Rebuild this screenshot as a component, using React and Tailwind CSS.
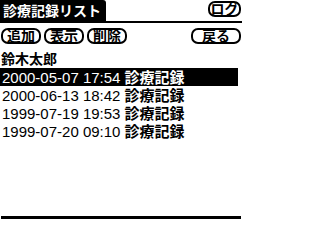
import React from 'react';

const records = [
  { date: '2000-05-07 17:54', label: '診療記録' },
  { date: '2000-06-13 18:42', label: '診療記録' },
  { date: '1999-07-19 19:53', label: '診療記録' },
  { date: '1999-07-20 09:10', label: '診療記録' },
];

function PalmButton({ children, className = '' }) {
  return (
    <button
      className={`h-[16px] px-[4px] border-2 border-black rounded-[7px] bg-white text-black text-[14px] leading-none font-bold whitespace-nowrap flex items-center justify-center ${className}`}
    >
      {children}
    </button>
  );
}

export default function App() {
  const selected = 0;

  return (
    <div
      className="w-[242px] h-[241px] bg-white text-black overflow-hidden flex flex-col"
      style={{ fontFamily: '"Liberation Sans", "Noto Sans CJK JP", sans-serif' }}
    >
      {/* Title bar */}
      <div className="flex items-end border-b-2 border-black">
        <div className="h-[21px] bg-black text-white text-[14px] font-bold leading-none flex items-center pl-[3px] pr-[5px] rounded-tr-[3px]">
          診療記録リスト
        </div>
        <PalmButton className="ml-auto mr-[1px] mb-[4px] w-[33px] text-[13px]">ログ</PalmButton>
      </div>

      {/* Command buttons */}
      <div className="flex items-center gap-[3px] mt-[5px] px-[1px]">
        <PalmButton className="w-[40px]">追加</PalmButton>
        <PalmButton className="w-[40px]">表示</PalmButton>
        <PalmButton className="w-[40px]">削除</PalmButton>
        <PalmButton className="ml-auto w-[50px]">戻る</PalmButton>
      </div>

      {/* Patient name */}
      <div className="mt-[7px] px-[1px] text-[14px] font-bold leading-[16px]">鈴木太郎</div>

      {/* Record list */}
      <div className="mt-[1px] flex flex-col">
        {records.map((r, i) => (
          <div
            key={i}
            className={`h-[18px] w-[238px] px-[2px] flex items-center text-[15px] leading-none whitespace-nowrap ${
              i === selected ? 'bg-black text-white' : ''
            }`}
          >
            <span>{r.date}</span>
            <span className="ml-[4px] text-[15px] font-bold">{r.label}</span>
          </div>
        ))}
      </div>

      <div className="mt-auto mb-[22px] mx-[1px] border-b-[3px] border-black" />
    </div>
  );
}
